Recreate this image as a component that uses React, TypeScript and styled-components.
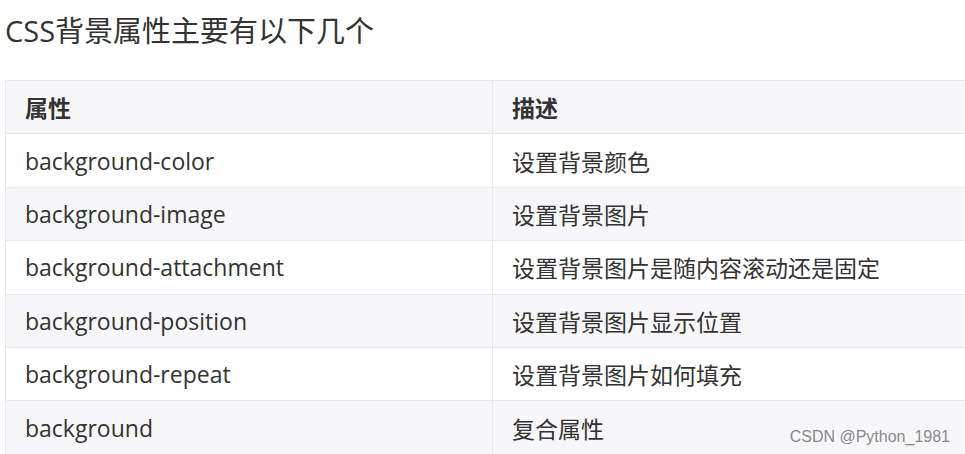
import { Fragment, ReactElement } from "react"

import styled, { createGlobalStyle } from "styled-components"

const GlobalStyle = createGlobalStyle`
  html, body {
    margin: 0;
    padding: 0;
    background: #ffffff;
    overflow: hidden;
  }
  body {
    font-family: "Open Sans", "Noto Sans CJK SC", sans-serif;
    color: #333333;
  }
`

const Page = styled.div`
  position: relative;
  width: 965px;
  height: 454px;
  padding: 0 0 0 5px;
  box-sizing: border-box;
  overflow: hidden;
`

const Title = styled.h2`
  margin: 0;
  padding-top: 11px;
  height: 80px;
  box-sizing: border-box;
  font-size: 29px;
  font-weight: 400;
  line-height: 40px;
  color: #333333;
`

const Table = styled.div`
  display: grid;
  grid-template-columns: 487px 480px;
  width: 967px;
  border-top: 1px solid #e9e8ec;
  border-left: 1px solid #e9e8ec;
`

const Cell = styled.div<{ $head?: boolean; $striped?: boolean }>`
  display: flex;
  align-items: center;
  height: 53.4px;
  box-sizing: border-box;
  padding-left: 19px;
  border-right: 1px solid #e9e8ec;
  border-bottom: 1px solid #e9e8ec;
  background: ${(p) => (p.$head || p.$striped ? "#f7f7f9" : "#ffffff")};
  font-size: 23px;
  font-weight: ${(p) => (p.$head ? 700 : 400)};
  color: #333333;
  white-space: nowrap;
`

const Watermark = styled.span`
  position: absolute;
  right: 15px;
  bottom: 8px;
  font-family: "Liberation Sans", Arial, sans-serif;
  font-size: 16px;
  color: #8a8a8a;
`

const rows: [string, string][] = [
  ["background-color", "设置背景颜色"],
  ["background-image", "设置背景图片"],
  ["background-attachment", "设置背景图片是随内容滚动还是固定"],
  ["background-position", "设置背景图片显示位置"],
  ["background-repeat", "设置背景图片如何填充"],
  ["background", "复合属性"],
]

function App(): ReactElement {
  return (
    <Page>
      <GlobalStyle />
      <Title>CSS背景属性主要有以下几个</Title>
      <Table>
        <Cell $head>属性</Cell>
        <Cell $head>描述</Cell>
        {rows.map(([name, desc], i) => (
          <Fragment key={name}>
            <Cell $striped={i % 2 === 1}>{name}</Cell>
            <Cell $striped={i % 2 === 1}>{desc}</Cell>
          </Fragment>
        ))}
      </Table>
      <Watermark>CSDN @Python_1981</Watermark>
    </Page>
  )
}

export default App
